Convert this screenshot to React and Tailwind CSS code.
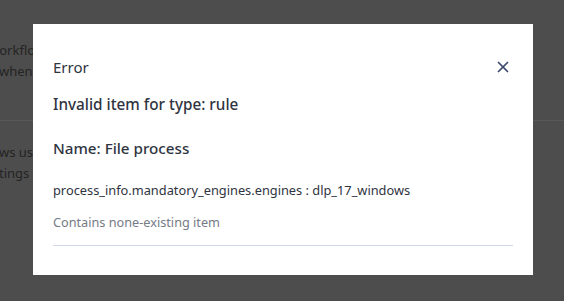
import { X } from "lucide-react";

const ErrorModal = () => {
  return (
    <div className="fixed inset-0 flex items-start justify-start pt-[24px] pl-[33px]">
      <div className="w-[500px] h-[251px] bg-white px-5 pt-[32px] text-[#2f3441]">
        <div className="flex items-center justify-between">
          <h3 className="text-[15px] leading-[22px]">Error</h3>
          <button className="text-[#3c4a6e] mr-[1px]">
            <X size={18} strokeWidth={2.3} />
          </button>
        </div>
        <p className="mt-[15px] text-[15.3px] leading-[22px] font-medium">
          Invalid item for type: rule
        </p>
        <p className="mt-[22px] text-[15.2px] leading-[22px] font-medium">
          Name: File process
        </p>
        <p className="mt-[21px] text-[12.8px] leading-[20px]">
          process_info.mandatory_engines.engines : dlp_17_windows
        </p>
        <p className="mt-[12px] text-[12.7px] leading-[20px] text-[#767b86]">
          Contains none-existing item
        </p>
        <div className="mt-[13px] border-b border-[#d3d8e8]" />
      </div>
    </div>
  );
};

export default function App() {
  return (
    <div
      className="relative h-[301px] w-full overflow-hidden bg-[#4d4d4d]"
      style={{ fontFamily: '"Noto Sans", sans-serif' }}
    >
      <div className="pt-[40px] text-[13px] leading-[21px] text-[#242424] whitespace-nowrap">
        <p className="-ml-[11px]">workflows run automatically</p>
        <p className="-ml-[1px]">when needed</p>
        <div className="mt-[38px] border-b border-[#595959]" />
        <p className="mt-[21px] -ml-[1px]">ws users to</p>
        <p className="-ml-[1px]">tings and</p>
      </div>
      <ErrorModal />
    </div>
  );
}
